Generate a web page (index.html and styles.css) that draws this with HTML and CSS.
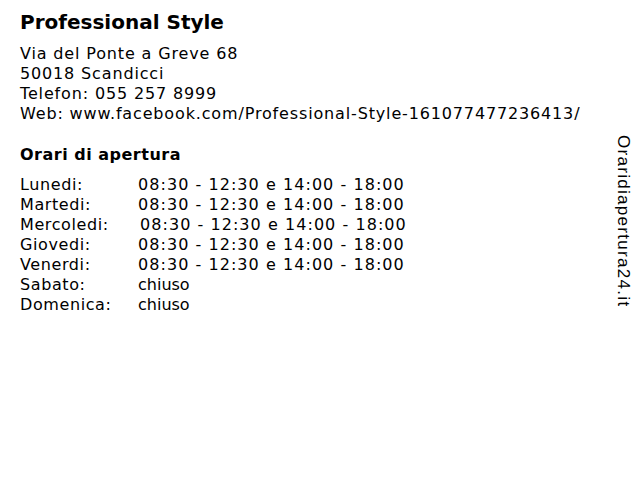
FILE: index.html
```html
<!DOCTYPE html>
<html lang="it">
<head>
    <meta charset="UTF-8">
    <meta name="viewport" content="width=device-width, initial-scale=1.0">
    <title>Professional Style</title>
    <link rel="stylesheet" href="styles.css">
</head>
<body>

    <div class="page">
        <div class="scheda">
            <h1>Professional Style</h1>

            <div class="indirizzo">
                Via del Ponte a Greve 68<br>
                50018 Scandicci<br>
                Telefon: 055 257 8999<br>
                Web: www.facebook.com/Professional-Style-161077477236413/
            </div>

            <h2>Orari di apertura</h2>

            <div class="orari">
                <span>Lunedi:</span><span>08:30 - 12:30 e 14:00 - 18:00</span>
                <span>Martedi:</span><span>08:30 - 12:30 e 14:00 - 18:00</span>
                <span>Mercoledi:</span><span class="sposta">08:30 - 12:30 e 14:00 - 18:00</span>
                <span>Giovedi:</span><span>08:30 - 12:30 e 14:00 - 18:00</span>
                <span>Venerdi:</span><span>08:30 - 12:30 e 14:00 - 18:00</span>
                <span>Sabato:</span><span class="chiuso">chiuso</span>
                <span>Domenica:</span><span class="chiuso">chiuso</span>
            </div>
        </div>

        <div class="marchio">Oraridiapertura24.it</div>
    </div>

</body>
</html>
```

FILE: styles.css
```css
/* Stili base */
body {
    margin: 0;
    font-family: "DejaVu Sans", Verdana, sans-serif;
    color: #000;
    background-color: #fff;
}

.page {
    display: flex;
    justify-content: space-between;
    padding: 10px 0 0 20px;
}

h1 {
    margin: 0 0 10px 0;
    font-size: 20px;
    line-height: 24px;
    font-weight: bold;
}

.indirizzo {
    font-size: 16px;
    line-height: 20px;
    letter-spacing: 0.85px;
}

h2 {
    margin: 21px 0 10px 0;
    font-size: 16px;
    line-height: 20px;
    font-weight: bold;
    letter-spacing: 0.5px;
}

/* Tabella orari: due colonne */
.orari {
    display: grid;
    grid-template-columns: 118px auto;
    font-size: 16px;
    line-height: 20px;
    letter-spacing: 0.6px;
}

.orari span:nth-child(even) {
    letter-spacing: 1.05px;
}

.orari span.sposta {
    padding-left: 2px;
}

.orari span.chiuso {
    letter-spacing: 0;
}

/* Scritta verticale a destra */
.marchio {
    writing-mode: vertical-rl;
    font-family: "Liberation Sans", Arial, sans-serif;
    font-size: 17px;
    letter-spacing: 1.3px;
    margin: 125px 7px 0 0;
}
```
